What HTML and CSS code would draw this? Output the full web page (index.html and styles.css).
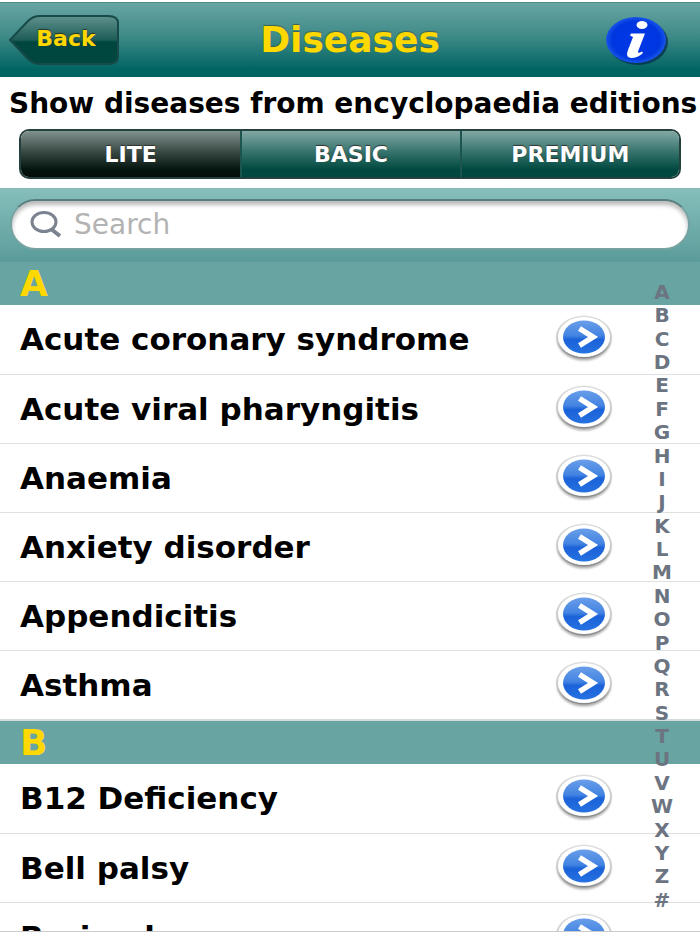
FILE: index.html
```
<!DOCTYPE html>
<html lang="en">
<head>
<meta charset="utf-8">
<meta name="viewport" content="width=device-width, initial-scale=1">
<title>Diseases</title>
<link rel="stylesheet" href="styles.css">
</head>
<body>
<svg class="defs" aria-hidden="true">
  <defs>
    <linearGradient id="blue" x1="0" y1="0" x2="0" y2="1">
      <stop offset="0" stop-color="#6a9ee9"/><stop offset=".46" stop-color="#4384e2"/>
      <stop offset=".58" stop-color="#1b62d8"/><stop offset="1" stop-color="#2672e2"/>
    </linearGradient>
    <linearGradient id="rim" x1="0" y1="0" x2="0" y2="1">
      <stop offset="0" stop-color="#dedede"/><stop offset=".6" stop-color="#cacaca"/><stop offset="1" stop-color="#858585"/>
    </linearGradient>
    <filter id="soft" x="-20%" y="-20%" width="140%" height="140%"><feGaussianBlur stdDeviation="1"/></filter>
    <symbol id="go" viewBox="0 0 60 50">
      <ellipse cx="30" cy="25.5" rx="27" ry="21" fill="#777" opacity=".6" filter="url(#soft)"/>
      <ellipse cx="30" cy="23" rx="28" ry="21.5" fill="url(#rim)"/>
      <ellipse cx="30" cy="23" rx="26" ry="20" fill="#fff"/>
      <ellipse cx="30" cy="23" rx="21" ry="16.5" fill="url(#blue)"/>
      <path d="M25.500 14.500 39 23 25.500 31.500" fill="none" stroke="#fff" stroke-width="5.500"/>
    </symbol>
  </defs>
</svg>
<div class="screen">
  <header class="bar">
    <button class="back" type="button">
      <svg viewBox="0 0 112 50" aria-hidden="true">
        <defs>
          <linearGradient id="backfill" x1="0" y1="0" x2="0" y2="1">
            <stop offset="0" stop-color="#5f918d"/><stop offset=".5" stop-color="#1e5c57"/>
            <stop offset=".54" stop-color="#00463f"/><stop offset="1" stop-color="#00473f"/>
          </linearGradient>
        </defs>
        <path d="M2 25 20 6Q25 1 32 1H100Q110 1 110 8V42Q110 49 100 49H32Q25 49 20 44Z" fill="url(#backfill)" stroke="#174a48" stroke-width="2"/>
      </svg>
      <span>Back</span>
    </button>
    <h1>Diseases</h1>
    <button class="info" type="button" aria-label="Information">
      <svg viewBox="0 0 64 52" aria-hidden="true">
        <defs>
          <radialGradient id="infofill" cx=".5" cy=".5" r=".5">
            <stop offset="0" stop-color="#0038e8"/><stop offset=".8" stop-color="#0036e0"/><stop offset="1" stop-color="#1856e8"/>
          </radialGradient>
        </defs>
        <ellipse cx="33" cy="28" rx="30" ry="23" fill="#062c50" opacity=".75"/>
        <ellipse cx="31" cy="26" rx="30" ry="23" fill="url(#infofill)"/>
        <ellipse cx="37" cy="11" rx="5.500" ry="4" fill="#fff"/>
        <path d="M26 19.500H40L33 37.500Q32.500 40 37 37.500L38 39Q33 44 26 44Q20 43 23 36L28 23 25 21.500Z" fill="#fff"/>
      </svg>
    </button>
  </header>
  <section class="editions">
    <h2>Show diseases from encyclopaedia editions</h2>
    <div class="segments">
      <button class="on" type="button" aria-pressed="true">LITE</button>
      <button type="button" aria-pressed="false">BASIC</button>
      <button type="button" aria-pressed="false">PREMIUM</button>
    </div>
  </section>
  <form class="find">
    <label class="field">
      <svg viewBox="0 0 32 28" aria-hidden="true"><ellipse cx="14" cy="11" rx="12" ry="9.500" fill="none" stroke="#7b8390" stroke-width="3"/><path d="M21 18 30 25" stroke="#7b8390" stroke-width="4"/></svg>
      <input type="search" placeholder="Search" aria-label="Search">
    </label>
  </form>
  <main class="results">
    <section>
      <h3>A</h3>
      <ul>
        <li><a href="#">Acute coronary syndrome<svg aria-hidden="true"><use href="#go"/></svg></a></li>
        <li><a href="#">Acute viral pharyngitis<svg aria-hidden="true"><use href="#go"/></svg></a></li>
        <li><a href="#">Anaemia<svg aria-hidden="true"><use href="#go"/></svg></a></li>
        <li><a href="#">Anxiety disorder<svg aria-hidden="true"><use href="#go"/></svg></a></li>
        <li><a href="#">Appendicitis<svg aria-hidden="true"><use href="#go"/></svg></a></li>
        <li><a href="#">Asthma<svg aria-hidden="true"><use href="#go"/></svg></a></li>
      </ul>
    </section>
    <section>
      <h3>B</h3>
      <ul>
        <li><a href="#">B12 Deficiency<svg aria-hidden="true"><use href="#go"/></svg></a></li>
        <li><a href="#">Bell palsy<svg aria-hidden="true"><use href="#go"/></svg></a></li>
        <li><a href="#">Brain abscess<svg aria-hidden="true"><use href="#go"/></svg></a></li>
      </ul>
    </section>
    <nav class="index" aria-label="Index">
      <a href="#">A</a><a href="#">B</a><a href="#">C</a><a href="#">D</a><a href="#">E</a><a href="#">F</a><a href="#">G</a><a href="#">H</a><a href="#">I</a><a href="#">J</a><a href="#">K</a><a href="#">L</a><a href="#">M</a><a href="#">N</a><a href="#">O</a><a href="#">P</a><a href="#">Q</a><a href="#">R</a><a href="#">S</a><a href="#">T</a><a href="#">U</a><a href="#">V</a><a href="#">W</a><a href="#">X</a><a href="#">Y</a><a href="#">Z</a><a href="#">#</a>
    </nav>
  </main>
</div>
</body>
</html>
```
FILE: styles.css
```
* { box-sizing: border-box; }
body {
  margin: 0;
  background: #fff;
  color: #000;
  font-family: "DejaVu Sans", sans-serif;
  font-weight: bold;
}
h1, h2, h3, ul { margin: 0; padding: 0; font-weight: bold; }
ul { list-style: none; }
a { color: inherit; text-decoration: none; }
button { border: 0; padding: 0; font: inherit; cursor: pointer; }
svg { display: block; }
.defs { position: absolute; width: 0; height: 0; }

.screen {
  display: flex;
  flex-direction: column;
  height: 100vh;
  padding: 2px 0;
  overflow: hidden;
}
.bar {
  flex: none;
  display: grid;
  grid-template-columns: 1fr auto 1fr;
  align-items: center;
  height: 75px;
  padding: 0 8px;
  background: linear-gradient(#68a5a3, #3e8a87 45%, #006562 90%, #006562);
  border-top: 1px solid #4c8c8a;
}
.bar h1 {
  color: #ffd800;
  font-size: 36px;
  line-height: 40px;
  text-shadow: 0 -1px 1px #3c6252;
}
.back {
  display: grid;
  width: 112px;
  height: 50px;
  background: none;
  color: #ffd800;
  font-size: 22px;
  line-height: 48px;
  text-shadow: 0 -1px 1px #26352a;
}
.back > * { grid-area: 1 / 1; }
.back svg { width: 112px; height: 50px; }
.back span { padding-left: 4px; }
.info {
  justify-self: end;
  width: 64px;
  height: 52px;
  margin-right: 23px;
  background: none;
}

.editions { flex: none; padding: 12px 0 9px; }
.editions h2 {
  padding-left: 9px;
  font-size: 28px;
  line-height: 30px;
  white-space: nowrap;
}
.segments {
  display: grid;
  grid-template-columns: repeat(3, 1fr);
  height: 50px;
  margin: 10px 19px 0;
  border: 2px solid #24413e;
  border-radius: 10px;
  overflow: hidden;
}
.segments button {
  background: linear-gradient(#82a8a4, #2f6e67 50%, #00483f 85%, #00483f);
  color: #fff;
  font-size: 22px;
  text-shadow: 0 -1px 1px #333;
}
.segments button + button { border-left: 2px solid #1c554e; }
.segments .on { background: linear-gradient(#82928e, #35443f 48%, #02130e 85%, #010c08); }

.find {
  flex: none;
  padding: 11px 10px 12px;
  background: linear-gradient(#86bfbc, #5a9c9a);
}
.field {
  display: flex;
  align-items: center;
  gap: 10px;
  height: 51px;
  padding: 0 18px;
  border: 2px solid #76a3a1;
  border-top-color: #577c7b;
  border-radius: 26px;
  background: #fff;
  box-shadow: inset 0 4px 4px #bbb;
}
.field svg { flex: none; width: 32px; height: 28px; }
.field input {
  flex: 1;
  min-width: 0;
  border: 0;
  outline: 0;
  background: none;
  font: 28px "DejaVu Sans", sans-serif;
}
.field input::placeholder { color: #b3b3b3; opacity: 1; }

.results {
  position: relative;
  flex: 1;
  min-height: 0;
  overflow: hidden;
  border-bottom: 1px solid #ccc;
}
section + section { border-top: 2px solid #d5dcdc; }
h3 {
  height: 43px;
  padding-left: 20px;
  background: #68a4a2;
  color: #ffd800;
  font-size: 36px;
  line-height: 43px;
}
li { height: 69px; }
li + li { border-top: 1px solid #e0e0e0; }
li a {
  display: flex;
  align-items: center;
  justify-content: space-between;
  height: 68px;
  padding: 0 86px 0 20px;
  font-size: 31px;
}
li svg { flex: none; width: 60px; height: 50px; }
.index {
  position: absolute;
  top: 19px;
  bottom: 19px;
  right: 26px;
  display: grid;
  grid-auto-rows: 1fr;
  width: 24px;
  color: #6b7480;
  font-size: 20px;
  line-height: 23px;
  text-align: center;
}
```
